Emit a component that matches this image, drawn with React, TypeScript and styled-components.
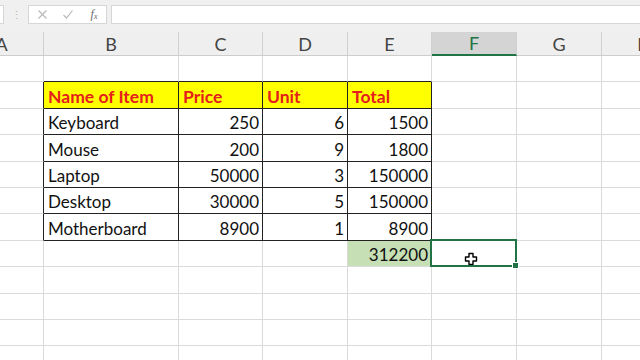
import styled, { createGlobalStyle } from "styled-components";

const GlobalStyle = createGlobalStyle`
  html, body {
    margin: 0;
    padding: 0;
    background: #fff;
    overflow: hidden;
  }
  body {
    font-family: Lato, "Liberation Sans", sans-serif;
  }
`;

const Screen = styled.div`
  width: 640px;
  height: 360px;
  overflow: hidden;
  background: #fff;
  display: flex;
  flex-direction: column;
`;

const FormulaBar = styled.div`
  flex-shrink: 0;
  height: 32px;
  box-sizing: border-box;
  padding: 5px 0 8px;
  background: #f0f0f0;
  display: flex;
  align-items: stretch;
`;

const NameBox = styled.div`
  width: 3px;
  background: #fff;
  border: 1px solid #d6d6d6;
  border-left: 0;
`;

const Grip = styled.div`
  width: 24px;
  display: flex;
  align-items: center;
  justify-content: center;
  color: #b4b4b4;
  font-size: 11px;
`;

const FxBox = styled.div`
  width: 79px;
  margin-right: 4px;
  box-sizing: border-box;
  background: #fff;
  border: 1px solid #d6d6d6;
  display: grid;
  grid-template-columns: repeat(3, 26px);
  align-items: center;
  justify-items: center;
`;

const FxLabel = styled.span`
  font-family: "Liberation Serif", serif;
  font-style: italic;
  font-size: 12px;
  color: #6a6a6a;
  sub {
    font-size: 8px;
    vertical-align: -1px;
  }
`;

const InputBox = styled.div`
  flex: 1;
  background: #fff;
  border: 1px solid #d6d6d6;
  border-right: 0;
`;

const Sheet = styled.div`
  flex-shrink: 0;
  display: grid;
  grid-template-columns: 84px 135px 84px 85px 84px 85px 85px 85px;
  grid-template-rows: 24px;
  grid-auto-rows: 26.4px;
  margin-left: -40px;
`;

const ColHead = styled.div<{ $active?: boolean }>`
  box-sizing: border-box;
  display: flex;
  align-items: center;
  justify-content: center;
  font-size: 18px;
  color: ${(p) => (p.$active ? "#217346" : "#444")};
  background: ${(p) => (p.$active ? "#d4d4d4" : "#efefef")};
  border-right: 1px solid #d0d0d0;
  border-bottom: ${(p) => (p.$active ? "2px solid #217346" : "1px solid #cdcdcd")};
`;

const Cell = styled.div<{
  $fill?: string;
  $right?: boolean;
  $bottom?: boolean;
  $num?: boolean;
  $head?: boolean;
  $selected?: boolean;
}>`
  position: relative;
  box-sizing: border-box;
  display: flex;
  align-items: flex-end;
  justify-content: ${(p) => (p.$num ? "flex-end" : "flex-start")};
  padding: 0 3px 1px 4px;
  font-size: ${(p) => (p.$head ? "17.5px" : "17px")};
  line-height: 20px;
  white-space: nowrap;
  color: ${(p) => (p.$head ? "#e4201c" : "#111")};
  font-weight: ${(p) => (p.$head ? 700 : 400)};
  background: ${(p) => p.$fill ?? "#fff"};
  border-right: 1px solid ${(p) => (p.$right ? "#222" : "#dadada")};
  border-bottom: 1px solid ${(p) => (p.$bottom ? "#222" : "#dadada")};

  ${(p) =>
    p.$selected &&
    `
    &::after {
      content: "";
      position: absolute;
      left: -2px;
      top: -2px;
      right: -1px;
      bottom: -1px;
      border: 2px solid #217346;
      pointer-events: none;
    }
  `}
`;

const Handle = styled.span`
  position: absolute;
  right: -3px;
  bottom: -3px;
  width: 5px;
  height: 5px;
  background: #217346;
  border: 1px solid #fff;
  z-index: 2;
`;

const Pointer = styled.svg`
  position: absolute;
  left: 32px;
  top: 11px;
`;

type CellData = { text?: string; num?: boolean; head?: boolean; fill?: string; selected?: boolean };

const columns = ["A", "B", "C", "D", "E", "F", "G", "H"];

const items: [string, number, number][] = [
  ["Keyboard", 250, 6],
  ["Mouse", 200, 9],
  ["Laptop", 50000, 3],
  ["Desktop", 30000, 5],
  ["Motherboard", 8900, 1],
];

const buildRows = (): CellData[][] => {
  const rows: CellData[][] = [];
  const blank = (): CellData[] => columns.map(() => ({}));
  rows.push(blank());
  const head = blank();
  ["Name of Item", "Price", "Unit", "Total"].forEach(
    (t, i) => (head[i + 1] = { text: t, head: true, fill: "#ffff00" })
  );
  rows.push(head);
  items.forEach(([name, price, unit]) => {
    const r = blank();
    r[1] = { text: name };
    r[2] = { text: String(price), num: true };
    r[3] = { text: String(unit), num: true };
    r[4] = { text: String(price * unit), num: true };
    rows.push(r);
  });
  const sum = blank();
  sum[4] = { text: String(items.reduce((s, [, p, u]) => s + p * u, 0)), num: true, fill: "#c6dfb4" };
  sum[5] = { selected: true };
  rows.push(sum);
  while (rows.length < 12) rows.push(blank());
  return rows;
};

const rows = buildRows();
const boxed = (r: number, c: number) => r >= 1 && r <= 6 && c >= 1 && c <= 4;

export default function App() {
  return (
    <Screen>
      <GlobalStyle />
      <FormulaBar>
        <NameBox />
        <Grip>⋮</Grip>
        <FxBox>
          <svg width="11" height="11" viewBox="0 0 11 11">
            <path d="M1.5 1.5l8 8M9.5 1.5l-8 8" stroke="#b9b9b9" strokeWidth="1.2" fill="none" />
          </svg>
          <svg width="12" height="11" viewBox="0 0 12 11">
            <path d="M1.5 6l3 3 6-7.5" stroke="#b9b9b9" strokeWidth="1.2" fill="none" />
          </svg>
          <FxLabel>
            f<sub>x</sub>
          </FxLabel>
        </FxBox>
        <InputBox />
      </FormulaBar>
      <Sheet>
        {columns.map((c) => (
          <ColHead key={c} $active={c === "F"}>
            {c}
          </ColHead>
        ))}
        {rows.map((row, r) =>
          row.map((cell, c) => (
            <Cell
              key={`${r}-${c}`}
              $fill={cell.fill}
              $num={cell.num}
              $head={cell.head}
              $selected={cell.selected}
              $right={boxed(r, c) || boxed(r, c + 1)}
              $bottom={boxed(r, c) || boxed(r + 1, c)}
            >
              {cell.text}
              {cell.selected && (
                <>
                  <Handle />
                  <Pointer width="14" height="14" viewBox="0 0 14 14">
                    <path
                      d="M5 1.5h4v3.5h3.5v4H9v3.5H5V9H1.5V5H5z"
                      fill="#fff"
                      stroke="#000"
                      strokeWidth="1.4"
                      strokeLinejoin="round"
                    />
                  </Pointer>
                </>
              )}
            </Cell>
          ))
        )}
      </Sheet>
    </Screen>
  );
}
